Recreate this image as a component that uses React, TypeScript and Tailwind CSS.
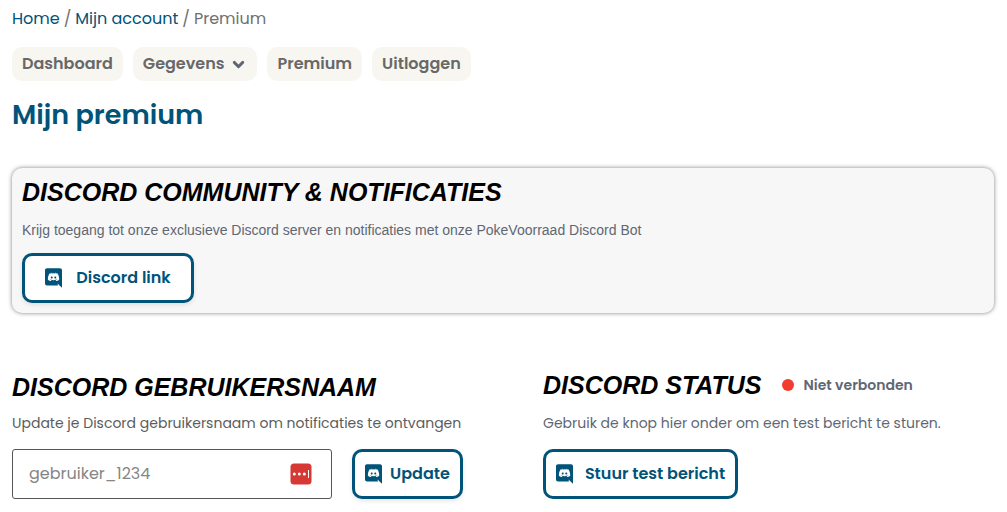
import React from 'react';
import { ChevronDown } from 'lucide-react';

const TABS = [
  { label: 'Dashboard' },
  { label: 'Gegevens', hasMenu: true },
  { label: 'Premium' },
  { label: 'Uitloggen' },
];

function DiscordIcon() {
  return (
    <svg viewBox="0 0 448 512" className="h-5 w-[17px] shrink-0 fill-current" aria-hidden="true">
      <path d="M297.216 243.2c0 15.616-11.52 28.416-26.112 28.416-14.336 0-26.112-12.8-26.112-28.416s11.52-28.416 26.112-28.416c14.592 0 26.112 12.8 26.112 28.416zm-119.552-28.416c-14.592 0-26.112 12.8-26.112 28.416s11.776 28.416 26.112 28.416c14.592 0 26.112-12.8 26.112-28.416.256-15.616-11.52-28.416-26.112-28.416zM448 52.736V512c-64.494-56.994-43.868-38.128-118.784-107.776l13.568 47.36H52.48C23.552 451.584 0 428.032 0 398.848V52.736C0 23.552 23.552 0 52.48 0h343.04C424.448 0 448 23.552 448 52.736zm-72.96 242.688c0-82.432-36.864-149.248-36.864-149.248-36.864-27.648-71.936-26.88-71.936-26.88l-3.584 4.096c43.52 13.312 63.744 32.512 63.744 32.512-60.811-33.329-132.244-33.335-191.232-7.424-9.472 4.352-15.104 7.424-15.104 7.424s21.248-20.224 67.328-33.536l-2.56-3.072s-35.072-.768-71.936 26.88c0 0-36.864 66.816-36.864 149.248 0 0 21.504 37.12 78.08 38.912 0 0 9.472-11.52 17.152-21.248-32.512-9.728-44.8-30.208-44.8-30.208 3.766 2.636 9.976 6.053 10.496 6.4 43.21 24.198 104.588 32.126 159.744 8.96 8.96-3.328 18.944-8.192 29.44-15.104 0 0-12.8 20.992-46.336 30.464 7.68 9.728 16.896 20.736 16.896 20.736 56.576-1.792 78.336-38.912 78.336-38.912z" />
    </svg>
  );
}

// Badge that the password manager puts inside the text box
function PasswordBadge() {
  return (
    <svg viewBox="0 0 22 22" className="size-[22px]" aria-hidden="true">
      <rect x="0.5" y="0.5" width="21" height="21" rx="3.5" fill="#d63834" />
      <circle cx="4.3" cy="11" r="1.5" fill="#fff" />
      <circle cx="9.3" cy="11" r="1.5" fill="#fff" />
      <circle cx="14.3" cy="11" r="1.5" fill="#fff" />
      <rect x="18" y="7" width="1" height="8" fill="#fff" />
    </svg>
  );
}

function SectionTitle({ id, className = 'leading-8', children }: { id?: string; className?: string; children: React.ReactNode }) {
  return (
    <h2 id={id} className={`font-['Liberation_Sans',Arial,sans-serif] text-[25px] font-bold italic text-black whitespace-nowrap ${className}`}>
      {children}
    </h2>
  );
}

function OutlineButton({ className, children }: { className: string; children: React.ReactNode }) {
  return (
    <button
      type="button"
      className={`flex h-[50px] shrink-0 items-center justify-center rounded-[10px] border-3 border-[#005379] bg-white text-base font-semibold whitespace-nowrap text-[#005379] ${className}`}
    >
      <DiscordIcon />
      {children}
    </button>
  );
}

export default function App() {
  return (
    <main className="bg-white pt-[7px] pr-[13px] pb-3 pl-3 font-['Poppins','Inter',sans-serif] text-[#5f6773]">
      <nav aria-label="Kruimelpad" className="flex gap-1 text-base leading-6 text-[#707070]">
        <a href="#home" className="text-[#005379]">Home</a>
        <span>/</span>
        <a href="#account" className="text-[#005379]">Mijn account</a>
        <span>/</span>
        <span>Premium</span>
      </nav>

      <nav aria-label="Account" className="mt-4 flex gap-2.5">
        {TABS.map((tab) => (
          <a
            key={tab.label}
            href={`#${tab.label.toLowerCase()}`}
            className="flex h-[34px] items-center gap-1.5 rounded-[10px] bg-[#f7f6f1] px-2.5 text-base font-semibold text-[#686868]"
          >
            {tab.label}
            {tab.hasMenu && <ChevronDown size={17} strokeWidth={4} className="text-[#5f6773]" />}
          </a>
        ))}
      </nav>

      <h1 className="mt-3.5 text-[27px] leading-10 font-semibold text-[#005379]">Mijn premium</h1>

      <section className="mt-[33px] rounded-[10px] bg-[#f7f7f7] px-2.5 pt-2 pb-2.5 shadow-[0_0_4px_0px_rgba(0,0,0,0.5)]">
        <SectionTitle>DISCORD COMMUNITY &amp; NOTIFICATIES</SectionTitle>
        <p className="mt-3 mb-[13px] font-['Liberation_Sans',Arial,sans-serif] text-sm leading-5">
          Krijg toegang tot onze exclusieve Discord server en notificaties met onze PokeVoorraad Discord Bot
        </p>
        <OutlineButton className="w-[172px] gap-3.5 shadow-[0_2px_4px_rgba(0,0,0,0.1)]">Discord link</OutlineButton>
      </section>

      <div className="mt-14 grid grid-cols-2 gap-20">
        <section>
          <SectionTitle id="username-title" className="leading-9">DISCORD GEBRUIKERSNAAM</SectionTitle>
          <p className="mt-2 mb-4 text-sm leading-5 whitespace-nowrap text-[#5c5c5c]">
            Update je Discord gebruikersnaam om notificaties te ontvangen
          </p>
          <div className="flex gap-5">
            <div className="relative flex-1">
              <input
                type="text"
                aria-labelledby="username-title"
                placeholder="gebruiker_1234"
                className="h-[50px] w-full rounded-[3px] border border-[#555555] bg-white pr-12 pb-0.5 pl-4 text-base text-[#555555] placeholder:text-[#858585]"
              />
              <span className="absolute inset-y-0 right-5 flex items-center">
                <PasswordBadge />
              </span>
            </div>
            <OutlineButton className="w-[111px] gap-2 shadow-[0_2px_4px_rgba(0,0,0,0.1)]">Update</OutlineButton>
          </div>
        </section>

        <section>
          <div className="flex items-center gap-5">
            <SectionTitle>DISCORD STATUS</SectionTitle>
            <p className="flex items-center gap-2.5 text-sm leading-5 font-semibold">
              <span className="size-3 rounded-full bg-[#f43b30]" />
              Niet verbonden
            </p>
          </div>
          <p className="mt-3 mb-4 text-sm leading-5 whitespace-nowrap">
            Gebruik de knop hier onder om een test bericht te sturen.
          </p>
          <OutlineButton className="w-[195px] gap-3">Stuur test bericht</OutlineButton>
        </section>
      </div>
    </main>
  );
}
